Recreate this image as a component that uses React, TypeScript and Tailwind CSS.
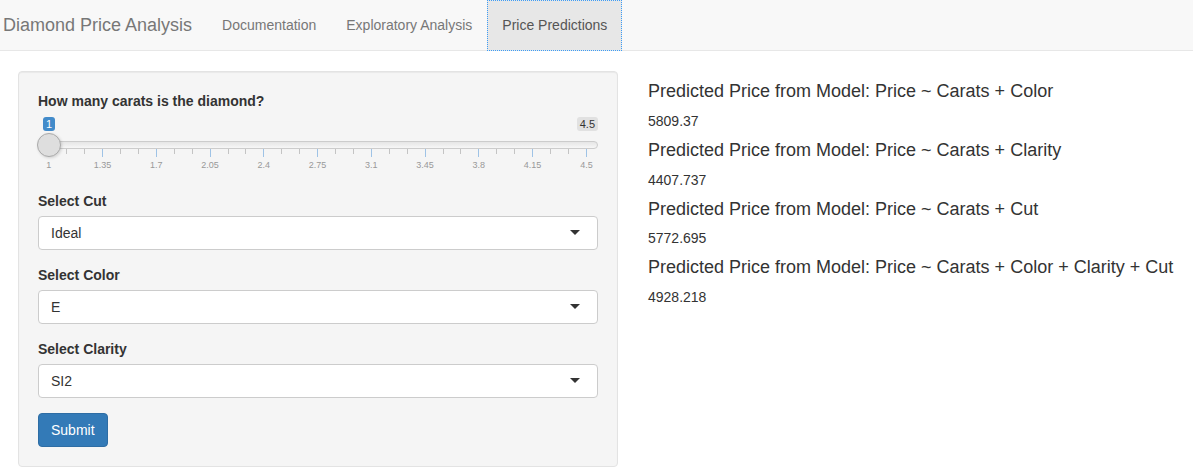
import React from "react";

const majors = ["1", "1.35", "1.7", "2.05", "2.4", "2.75", "3.1", "3.45", "3.8", "4.15", "4.5"];

function Slider() {
  const start = 10.3;
  const step = 17.92;
  const ticks = Array.from({ length: 31 }, (_, i) => i);
  return (
    <div className="relative h-[60px]">
      <div className="absolute left-[5px] top-[1px] h-[14px] rounded-[3px] bg-[#428bca] px-[3px] text-[11px] leading-[14px] text-white">
        1
      </div>
      <div className="absolute right-0 top-[1px] h-[14px] rounded-[3px] bg-[#e1e1e1] px-[3px] text-[11px] leading-[14px] text-[#333]">
        4.5
      </div>
      <div className="absolute left-0 right-0 top-[25px] h-[8px] rounded-full border border-[#cccccc] bg-[linear-gradient(to_bottom,#dddddd_-50%,#ffffff_150%)]" />
      {ticks.map((i) => {
        const major = i % 3 === 0;
        return (
          <div
            key={i}
            className={major ? "absolute top-[33px] h-[8px] w-px bg-[#9fc3e6]" : "absolute top-[33px] h-[5px] w-px bg-[#c4c4c4]"}
            style={{ left: start + i * step }}
          />
        );
      })}
      {majors.map((m, i) => (
        <div
          key={m}
          className="absolute top-[44px] w-[40px] -translate-x-1/2 text-center text-[9px] leading-[10px] text-[#999]"
          style={{ left: start + 0.5 + i * step * 3 }}
        >
          {m}
        </div>
      ))}
      <div className="absolute left-[-1px] top-[17px] h-[24px] w-[24px] rounded-full border border-[#aaaaaa] bg-[#dedede] shadow-[1px_1px_3px_rgba(0,0,0,0.15)]" />
    </div>
  );
}

function SelectBox({ label, value }: { label: string; value: string }) {
  return (
    <div className="mb-[15px]">
      <div className="mb-[5px] text-[14px] font-bold leading-[20px] text-[#333]">{label}</div>
      <div className="flex h-[34px] items-center justify-between rounded-[4px] border border-[#cccccc] bg-white pl-[12px] pr-[17px] text-[14px] text-[#333]">
        <span>{value}</span>
        <span className="mt-[-1px] h-0 w-0 border-x-[5px] border-t-[5px] border-x-transparent border-t-[#333]" />
      </div>
    </div>
  );
}

const results = [
  ["Predicted Price from Model: Price ~ Carats + Color", "5809.37"],
  ["Predicted Price from Model: Price ~ Carats + Clarity", "4407.737"],
  ["Predicted Price from Model: Price ~ Carats + Cut", "5772.695"],
  ["Predicted Price from Model: Price ~ Carats + Color + Clarity + Cut", "4928.218"],
];

export default function App() {
  return (
    <div className="min-h-[471px] bg-white font-['Liberation_Sans',Arial,sans-serif] text-[14px] text-[#333]">
      <div className="flex h-[51px] border-b border-[#e7e7e7] bg-[#f8f8f8]">
        <div className="flex h-[50px] items-center pl-[3px] pr-[15px] text-[18px] leading-[20px] text-[#777]">
          Diamond Price Analysis
        </div>
        <div className="flex h-[50px] items-center px-[15px] text-[14px] text-[#777]">Documentation</div>
        <div className="flex h-[50px] items-center px-[15px] text-[14px] text-[#777]">Exploratory Analysis</div>
        <div className="flex h-[51px] items-center border border-dotted border-[#3c9cf5] bg-[#e7e7e7] px-[14px] text-[14px] text-[#555]">
          Price Predictions
        </div>
      </div>
      <div className="flex pt-[20px]">
        <div className="ml-[18px] w-[600px] shrink-0 rounded-[4px] border border-[#e3e3e3] bg-[#f5f5f5] px-[19px] pb-[19px] pt-[19px] shadow-[inset_0_1px_1px_rgba(0,0,0,0.05)]">
          <div className="mb-[15px]">
            <div className="mb-[5px] text-[14px] font-bold leading-[20px] text-[#333]">How many carats is the diamond?</div>
            <Slider />
          </div>
          <SelectBox label="Select Cut" value="Ideal" />
          <SelectBox label="Select Color" value="E" />
          <SelectBox label="Select Clarity" value="SI2" />
          <button className="h-[34px] rounded-[4px] border border-[#2e6da4] bg-[#337ab7] px-[12px] text-[14px] leading-[20px] text-white">
            Submit
          </button>
        </div>
        <div className="ml-[30px] flex flex-col pt-[1px]">
          {results.map(([h, v]) => (
            <div key={h}>
              <h4 className="my-[10px] text-[18px] font-normal leading-[1.1] text-[#333]">{h}</h4>
              <div className="mt-[-1px] text-[14px] leading-[20px] text-[#333]">{v}</div>
            </div>
          ))}
        </div>
      </div>
    </div>
  );
}
